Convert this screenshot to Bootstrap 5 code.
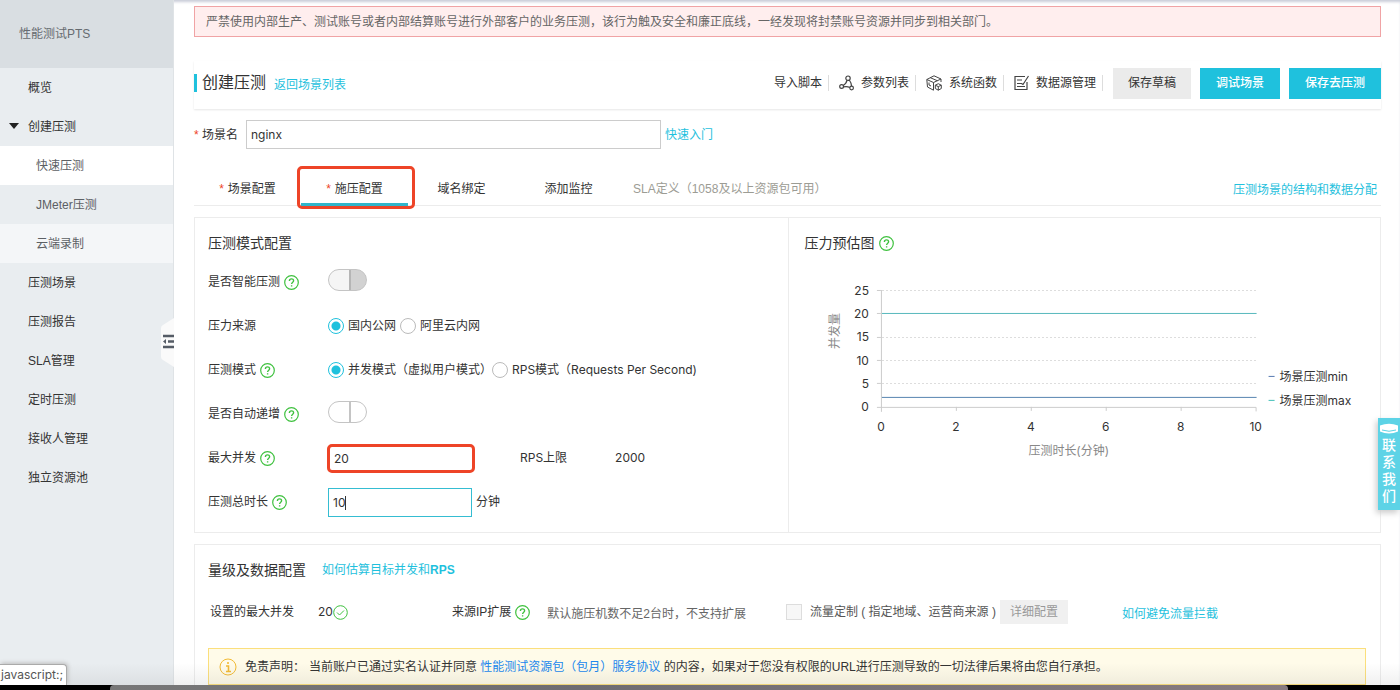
<!DOCTYPE html>
<html lang="zh-CN">
<head>
<meta charset="utf-8">
<meta name="viewport" content="width=device-width, initial-scale=1">
<title>性能测试PTS</title>
<link href="https://cdn.jsdelivr.net/npm/bootstrap@5.3.0/dist/css/bootstrap.min.css" rel="stylesheet">
<style>
:root{--cy:#1fc1dd;--line:#ececec;--red:#ee4427}
body{font:12px/20px "Liberation Sans","Noto Sans CJK SC",sans-serif;color:#333}
.ui{font-family:Inter,"Noto Sans CJK SC",sans-serif}
a{color:var(--cy);text-decoration:none}
.shell{box-shadow:inset 0 3px 3px -1px #c9cdd8}
.side{width:174px;background:#e9edf0;border-right:1px solid #dfe3e6}
.side-head{height:68px;background:#d9dee2;padding:0 19px;color:#666b70}
.side a{height:39px;padding-left:28px;color:#333;display:flex;align-items:center}
.side a.sub{padding-left:36px;color:#5c6064}
.side a.on{background:#fff}
.side a.hov{background:#f4f6f8}
.caret{left:9px;top:16px;border:5px solid transparent;border-top:6px solid #222;border-bottom:0}
.handle{right:-1px;top:318px;width:13px;height:49px;z-index:2}
.work{padding:6px 19px 0 20px}
.ban{height:31px;background:#ffeeee;border:1px solid #f0a3a5;color:#666;padding:0 11px}
.head{height:48px;margin-top:24px;padding-bottom:4px;box-shadow:0 1px 2px #e6e6e6}
.head h1{font-size:16px;line-height:18px;border-left:3px solid var(--cy);padding-left:5px}
.tool{color:#333;padding:0 6px 0 10px;height:16px;line-height:16px;border-right:1px solid #ddd;display:flex;align-items:center;gap:7px}
.acts{gap:9px;margin-left:10px}
.act{height:31px;border:0;border-radius:0;font-size:12px;line-height:20px;padding:0 15px}
.act.pri{background:var(--cy);color:#fff;font-weight:500;padding:0 16px}
.act.pri:hover{background:#17b0cb;color:#fff}
.act.gray{background:#ebebeb;color:#333}
.act.low{height:24px;padding:0 10px;background:#f0f0f0;color:#999}
.scene-row{margin-top:11px}
.field{height:29px;border:1px solid #ccc;border-radius:0;font-size:12px;padding:0 4px;color:#333}
.scene{width:415px}
.star{color:var(--red)}
.tabs{height:36px;margin-top:21px;border-bottom:1px solid var(--line)}
.tabs a{width:107px;height:36px;padding-top:2px;color:#333;display:flex;align-items:center;justify-content:center}
.tabs a.on{border-bottom:3px solid #2fb5cb;padding-top:5px}
.tabs a.wide{width:auto;padding-left:11px;color:#9c9c94}
.tabs a.guide{width:auto;color:var(--cy)}
.ring{inset:-4px -7px -6px -4px;border:3px solid var(--red);border-radius:5px;pointer-events:none}
.panel{border:1px solid var(--line);margin-top:11px}
h2{font-size:14px;line-height:24px;margin:0}
.cfg{padding:13px 13px 8px}
.rows{padding-top:5px}
.line-row{height:44px}
.lab{width:120px}
.q{width:15px;height:15px;flex:none}
.form-check-input{width:16px;height:16px;margin:0;border-color:#bbb;flex:none}
.form-check-input[type=radio]:checked{background:radial-gradient(circle closest-side,var(--cy) 0 4px,#fff 5px);border-color:var(--cy)}
.form-check-input[type=checkbox]{border-radius:0;background-color:#f7f7f7;border-color:#ddd}
.tog{appearance:none;width:39px;height:22px;border:1px solid #c4c4c4;border-radius:11px;margin:0 0 5px;background:linear-gradient(90deg,#fff 0 20px,#c4c4c4 20px 22px,#fff 22px)}
.tog:disabled{background:linear-gradient(90deg,#f5f5f5 0 20px,#b5b5b5 20px 22px,#d2d2d2 22px)}
.num{width:144px}
.num.hot{width:148px;border:3px solid var(--red);border-radius:5px;margin-left:-1px;padding:0 4px}
.num.now{border-color:#35bdd2}
.gap-col{margin-left:45px}
.cursor{left:17px;top:8px;width:1px;height:14px;background:#333}
.split{border-left:1px solid var(--line);padding-top:13px}
.chart{margin-top:17px}
.chart text{fill:#333;font-size:12px}
.chart .dim{fill:#888}
.level{margin-top:10px;padding-left:15px}
.ip{margin-left:104px}
.tip{margin-left:17px;color:#666}
.flow{margin-left:40px;color:#555}
.avoid{margin-left:54px}
.warn{height:37px;background:#fffbe9;border:1px solid #fbdf7c;padding:0 10px;margin:24px 14px 0 13px}
.warn a{color:#2188ee}
.contact{right:0;top:418px;width:22px;height:92px;background:#5dd3e6;color:#fff;font-size:14px;font-weight:500;line-height:17px;box-shadow:-2px 3px 6px #ccc;padding-top:4px;text-align:center}
.contact svg{margin-bottom:2px}
.status{left:0;bottom:0;height:21px;background:#fff;border:1px solid #aaa;border-left:0;border-bottom:0;border-radius:0 4px 0 0;padding:0 3px 0 1px;color:#555;box-shadow:1px -1px 4px #bbb}
.dock{height:5px;background:#000;padding:0 8% 0 110px}
.dock div{height:5px;background:linear-gradient(90deg,#777,#6e6c72 40%,#877b80);border-radius:4px 4px 0 0}
.fade-low{left:0;right:0;bottom:0;height:22px;background:linear-gradient(transparent,rgba(90,90,90,.09));pointer-events:none}
</style>
</head>
<body class="vh-100 overflow-hidden d-flex flex-column">
<svg class="d-none">
  <symbol id="help" viewBox="0 0 15 15"><circle cx="7.500" cy="7.500" r="6.800" fill="none" stroke="#3fc13f" stroke-width="1.200"/><path d="M5.400 6C5.400 3.100 9.700 3.200 9.600 5.800 9.600 7.200 7.600 7.300 7.600 9M7.600 10.300v1.200" fill="none" stroke="#3fc13f" stroke-width="1.400"/></symbol>
</svg>
<div class="shell d-flex flex-grow-1 overflow-hidden position-relative">
  <nav class="side flex-shrink-0 position-relative">
    <div class="side-head d-flex align-items-center">性能测试PTS</div>
    <a href="#">概览</a>
    <a href="#" class="position-relative"><span class="caret position-absolute"></span>创建压测</a>
    <a href="#" class="sub on">快速压测</a>
    <a href="#" class="sub">JMeter压测</a>
    <a href="#" class="sub hov">云端录制</a>
    <a href="#">压测场景</a>
    <a href="#">压测报告</a>
    <a href="#">SLA管理</a>
    <a href="#">定时压测</a>
    <a href="#">接收人管理</a>
    <a href="#">独立资源池</a>
    <svg class="handle position-absolute" viewBox="0 0 13 49"><path d="M13 0v49L2 42Q0 41 0 39V10Q0 8 2 7z" fill="#fafafa"/><path d="M2 18h11M2 29h11M7 23.500h6" stroke="#555c66" stroke-width="2.400"/><path d="M2 23.500l3-2.500v5z" fill="#555c66"/></svg>
  </nav>
  <main class="work flex-grow-1">
    <div class="ban d-flex align-items-center text-nowrap">严禁使用内部生产、测试账号或者内部结算账号进行外部客户的业务压测，该行为触及安全和廉正底线，一经发现将封禁账号资源并同步到相关部门。</div>
    <header class="head d-flex align-items-center">
      <h1 class="m-0 fw-normal">创建压测</h1>
      <a href="#" class="ms-2 pt-1">返回场景列表</a>
      <div class="ms-auto d-flex align-items-center">
        <a href="#" class="tool">导入脚本</a>
        <a href="#" class="tool"><svg width="15" height="16" viewBox="0 0 15 16" fill="none" stroke="#444" stroke-width="1.200"><circle cx="9" cy="3.200" r="2.200"/><circle cx="2.600" cy="11.500" r="1.900"/><circle cx="12.600" cy="13" r="1.800"/><path d="M8 5.200Q7.500 8.500 4.200 10.400M10.300 5Q12.500 8 12.600 11.200M4.500 11.900Q8 11 10.900 12.500"/></svg>参数列表</a>
        <a href="#" class="tool"><svg width="16" height="16" viewBox="0 0 16 16" fill="none" stroke="#444" stroke-width="1"><path d="M7.500 15.200L1.500 12 .800 4.500 8 .800l7 3.200V7M.800 4.500L7.500 7.500 15 4M4.300 2.700l7 3M7.500 7.500v7.700M9.300 10.200l3-1.500 3 1.500v3.300l-3 1.700-3-1.700zM9.300 10.200l3 1.400 3-1.400M12.300 11.600v3.600M3 7.500v2.500l2 1"/></svg>系统函数</a>
        <a href="#" class="tool"><svg width="15" height="16" viewBox="0 0 15 16" fill="none" stroke="#444" stroke-width="1.200"><path d="M11 1.500H1v13h12V7M3 5h5M3 8.500h4.500l1.500 1L14.500 1M3 11.500h8"/></svg>数据源管理</a>
        <div class="acts d-flex">
          <button class="btn act gray">保存草稿</button>
          <button class="btn act pri">调试场景</button>
          <button class="btn act pri">保存去压测</button>
        </div>
      </div>
    </header>
    <div class="scene-row d-flex align-items-center">
      <label for="scene" class="me-2 text-nowrap"><span class="star">*</span> 场景名</label>
      <input id="scene" class="form-control field scene ui" value="nginx">
      <a href="#" class="ms-1">快速入门</a>
    </div>
    <nav class="tabs d-flex">
      <a href="#"><span class="star me-1">*</span>场景配置</a>
      <a href="#" class="on position-relative"><span class="star me-1">*</span>施压配置<span class="ring position-absolute"></span></a>
      <a href="#">域名绑定</a>
      <a href="#">添加监控</a>
      <a href="#" class="wide">SLA定义（1058及以上资源包可用）</a>
      <a href="#" class="guide ms-auto me-1 pt-1">压测场景的结构和数据分配</a>
    </nav>
    <section class="panel row g-0">
      <div class="col-6 cfg">
        <h2 class="fw-normal">压测模式配置</h2>
        <div class="rows">
        <div class="line-row d-flex align-items-center"><label for="t1" class="lab d-flex align-items-center gap-1">是否智能压测<svg class="q"><use href="#help"/></svg></label><input id="t1" type="checkbox" class="tog" disabled></div>
        <div class="line-row d-flex align-items-center"><span class="lab">压力来源</span>
          <input class="form-check-input" type="radio" name="src" id="s1" checked><label for="s1" class="px-1">国内公网</label>
          <input class="form-check-input" type="radio" name="src" id="s2"><label for="s2" class="ps-1">阿里云内网</label></div>
        <div class="line-row d-flex align-items-center"><span class="lab d-flex align-items-center gap-1">压测模式<svg class="q"><use href="#help"/></svg></span>
          <input class="form-check-input" type="radio" name="mode" id="m1" checked><label for="m1" class="ps-1">并发模式（虚拟用户模式）</label>
          <input class="form-check-input" type="radio" name="mode" id="m2"><label for="m2" class="ps-1 ui">RPS模式（Requests Per Second)</label></div>
        <div class="line-row d-flex align-items-center"><label for="t2" class="lab d-flex align-items-center gap-1">是否自动递增<svg class="q"><use href="#help"/></svg></label><input id="t2" type="checkbox" class="tog"></div>
        <div class="line-row d-flex align-items-center ui"><label for="n1" class="lab d-flex align-items-center gap-1">最大并发<svg class="q"><use href="#help"/></svg></label><input id="n1" class="form-control field num hot" value="20"><span class="gap-col">RPS上限</span><span class="ms-5">2000</span></div>
        <div class="line-row d-flex align-items-center ui"><label for="n2" class="lab d-flex align-items-center gap-1">压测总时长<svg class="q"><use href="#help"/></svg></label><div class="position-relative"><input id="n2" class="form-control field num now" value="10"><span class="cursor position-absolute"></span></div><span class="ms-1">分钟</span></div>
        </div>
      </div>
      <div class="col-6 split">
        <h2 class="fw-normal d-flex align-items-center gap-1 ps-3">压力预估图<svg class="q"><use href="#help"/></svg></h2>
        <svg class="ui chart w-100 d-block" viewBox="0 0 592 200">
          <g stroke="#ddd" stroke-dasharray="2 2" shape-rendering="crispEdges"><path d="M93 18.500H468M93 65.500H468M93 88.500H468M93 111.500H468"/></g>
          <path d="M92.500 18V140M88 18.500h4M88 41.500h4M88 65.500h4M88 88.500h4M88 111.500h4M88 135.500H467.500v4M167.500 135v4M242.500 135v4M317.500 135v4M392.500 135v4" fill="none" stroke="#ccc"/>
          <path d="M93 41.500H468" stroke="#56b8bd"/><path d="M93 125.500H468" stroke="#5584b0"/>
          <g text-anchor="end"><text x="80" y="23">25</text><text x="80" y="46">20</text><text x="80" y="69">15</text><text x="80" y="93">10</text><text x="80" y="116">5</text><text x="80" y="139">0</text></g>
          <g text-anchor="middle"><text x="92" y="159">0</text><text x="167" y="159">2</text><text x="242" y="159">4</text><text x="317" y="159">6</text><text x="392" y="159">8</text><text x="467" y="159">10</text>
          <text class="dim" x="280" y="183">压测时长(分钟)</text><text class="dim" transform="translate(50 59) rotate(-90)">并发量</text></g>
          <path d="M480 104.500h6" stroke="#5578b0"/><path d="M480 128.500h6" stroke="#40c0b8"/>
          <text x="491" y="109">场景压测min</text><text x="491" y="133">场景压测max</text>
        </svg>
      </div>
    </section>
    <section class="panel pb-4">
      <div class="d-flex align-items-center cfg"><h2 class="fw-normal me-3">量级及数据配置</h2><a href="#">如何估算目标并发和<b>RPS</b></a></div>
      <div class="level d-flex align-items-center text-nowrap">
        <span class="me-4">设置的最大并发</span><span class="ui">20</span>
        <svg class="q" viewBox="0 0 15 15" fill="none" stroke="#3fc13f"><circle cx="7.500" cy="7.500" r="6.800"/><path d="M4 7.500l2.500 2.500L11 5.500"/></svg>
        <span class="ip d-flex align-items-center gap-1">来源IP扩展<svg class="q"><use href="#help"/></svg></span>
        <span class="tip pt-1">默认施压机数不足2台时，不支持扩展</span>
        <span class="flow d-flex align-items-center"><input type="checkbox" id="flow" class="form-check-input"><label for="flow" class="ms-2">流量定制 ( 指定地域、运营商来源 )</label></span>
        <button class="btn act low ms-1">详细配置</button>
        <a href="#" class="avoid pt-1">如何避免流量拦截</a>
      </div>
      <div class="warn d-flex align-items-center text-nowrap">
        <svg width="18" height="18" viewBox="0 0 18 18" fill="none" stroke="#f3bb35" class="me-2"><circle cx="9" cy="9" r="8"/><path d="M7 8h2.500v5M7 13.500h5M9 4v2" stroke-width="1.600"/></svg>
        <span class="me-1">免责声明：</span><span>当前账户已通过实名认证并同意 <a href="#">性能测试资源包（包月）服务协议</a> 的内容，如果对于您没有权限的URL进行压测导致的一切法律后果将由您自行承担。</span>
      </div>
    </section>
  </main>
  <div class="fade-low position-absolute"></div>
  <a href="#" class="contact position-absolute d-block"><svg width="20" height="13" viewBox="0 0 20 13" class="d-block mx-auto"><path d="M1 3.500Q10 0 19 3.500v6q-9 4-18 0z" fill="#fff"/><path d="M3 8q7 2.500 14 0" stroke="#5dd3e6" fill="none"/></svg>联<br>系<br>我<br>们</a>
  <div class="status position-absolute ui">javascript:;</div>
</div>
<div class="dock flex-shrink-0"><div></div></div>
<script src="https://cdn.jsdelivr.net/npm/bootstrap@5.3.0/dist/js/bootstrap.bundle.min.js"></script>
</body>
</html>
